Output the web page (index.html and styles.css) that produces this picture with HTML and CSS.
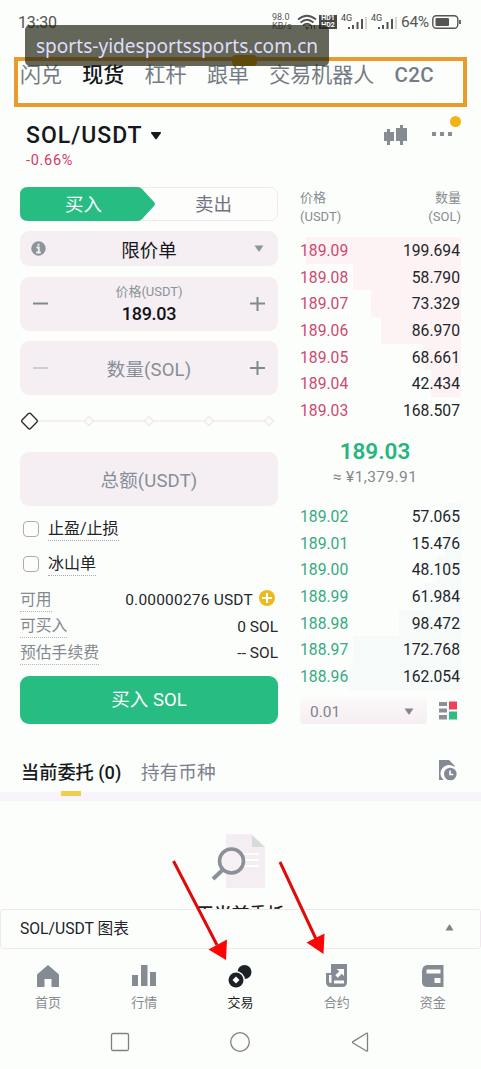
FILE: index.html
```html
<!DOCTYPE html>
<html lang="zh-CN">
<head>
<meta charset="utf-8">
<title>SOL/USDT</title>
<link rel="stylesheet" href="styles.css">
</head>
<body>
<div class="screen">
  <header class="status">
    <span class="clock">13:30</span>
    <span class="speed"><span>98.0</span><span>KB/s</span></span>
    <svg class="wifi" width="20" height="17" viewBox="0 0 20 17" fill="none" stroke="#555" stroke-width="1.7"><path d="M1 5.500Q10-2 19 5.500M3.500 8.500Q10 3 16.500 8.500M6 11.500Q10 8 14 11.500"/><path d="M8 13.300h4l-2 2.400z" fill="#555" stroke="none"/><path d="M14.500 11v4M17.500 11v4" stroke-width="1"/></svg>
    <span class="hd"><span>HD1</span><span>HD2</span></span>
    <svg class="signal" width="27" height="17" viewBox="0 0 27 17"><text x="0" y="7" class="gen">4G</text><path d="M7 13h2v2H7zM11 11h2v4h-2zM15.500 8h2v7h-2zM20 5h2v10h-2z" fill="#555"/><path d="M24 3h2v12h-2z" fill="#d4d4d4"/></svg>
    <svg class="signal" width="27" height="17" viewBox="0 0 27 17"><text x="0" y="7" class="gen">4G</text><path d="M7 13h2v2H7zM11 11h2v4h-2zM15.500 8h2v7h-2zM20 5h2v10h-2z" fill="#555"/><path d="M24 3h2v12h-2z" fill="#d4d4d4"/></svg>
    <span class="percent">64%</span>
    <svg class="battery" width="30" height="14" viewBox="0 0 30 14"><rect x=".8" y=".8" width="25" height="12.400" rx="3.500" fill="none" stroke="#555" stroke-width="1.400"/><rect x="3.500" y="3" width="13.500" height="8" rx="1" fill="#555"/><path d="M28 5v4" stroke="#555" stroke-width="1.800"/></svg>
  </header>
  <nav class="tabs">
    <span>闪兑</span><span class="on">现货</span><span>杠杆</span><span>跟单</span><span>交易机器人</span><span class="c2c">C2C</span>
    <i class="tabs-badge"></i>
  </nav>
  <section class="pair">
    <div class="pair-main">
      <div class="pair-name"><span>SOL/USDT</span><svg width="12" height="9" viewBox="0 0 12 9"><path d="M1.500 1h9q1 .3.300 1.300L6.700 8q-.7.700-1.400 0L1.200 2.300Q.5 1.300 1.500 1z" fill="#15181d"/></svg></div>
      <div class="change">-0.66%</div>
    </div>
    <svg class="candles" width="24" height="22" viewBox="0 0 24 22" fill="#858c93"><path d="M0 7h3V4h3v3h4v9H6v4H3v-4H0zM12 3h4V0h3v3h4v13h-4v4h-3v-4h-4z"/></svg>
    <div class="more"><i></i><i></i><i></i><b></b></div>
  </section>
  <main class="trade">
    <section class="form">
      <div class="side">
        <svg width="258" height="34" viewBox="0 0 258 34"><rect x=".5" y=".5" width="257" height="33" rx="7" fill="#fdfdfc" stroke="#f2e8ee"/><path d="M8 0H117q4 0 6 3l11 12q2 2 0 4L123 31q-2 3-6 3H8q-8 0-8-8V8q0-8 8-8z" fill="#27bc81"/></svg>
        <span class="buy">买入</span><span class="sell">卖出</span>
      </div>
      <div class="box type">
        <svg width="15" height="15" viewBox="0 0 15 15"><circle cx="7.500" cy="7.500" r="7.200" fill="#8d949b"/><path d="M7.500 2.800v2M5.500 6.500h2.300v5M5.200 11.500h4.600" stroke="#f5eef2" stroke-width="1.800" fill="none"/></svg>
        <span>限价单</span>
        <svg width="10" height="7" viewBox="0 0 10 7"><path d="M.5.500h9L5.700 6Q5 7 4.300 6z" fill="#8d949b"/></svg>
      </div>
      <div class="box stepper price">
        <svg width="15" height="15" viewBox="0 0 15 15"><path d="M0 6.500h15" stroke="#808991" stroke-width="2"/></svg>
        <div class="field"><span class="label">价格(USDT)</span><strong>189.03</strong></div>
        <svg width="15" height="15" viewBox="0 0 15 15"><path d="M0 6.500h15M7.500 0v14" stroke="#808991" stroke-width="2"/></svg>
      </div>
      <div class="box stepper amount">
        <svg width="15" height="15" viewBox="0 0 15 15"><path d="M0 7h15" stroke="#cdced2" stroke-width="2"/></svg>
        <span class="placeholder">数量(SOL)</span>
        <svg width="15" height="15" viewBox="0 0 15 15"><path d="M0 7h15M7.500 0v14" stroke="#808991" stroke-width="2"/></svg>
      </div>
      <svg class="slider" width="258" height="20" viewBox="0 0 258 20"><path d="M18 10h231" stroke="#f5e9ee" stroke-width="1.500"/><g fill="#fcfefb" stroke="#f2e8ec" stroke-width="1.300"><path d="M69 5.500l4.500 4.500-4.500 4.500-4.500-4.500zM129 5.500l4.500 4.500-4.500 4.500-4.500-4.500zM189 5.500l4.500 4.500-4.500 4.500-4.500-4.500zM249 5.500l4.500 4.500-4.500 4.500-4.500-4.500z"/></g><rect x="3.500" y="4" width="12" height="12" rx="1.500" transform="rotate(45 9.500 10)" fill="#fdfffc" stroke="#24272b" stroke-width="1.300"/></svg>
      <div class="box total"><span class="placeholder">总额(USDT)</span></div>
      <div class="check"><i></i><span>止盈/止损</span></div>
      <div class="check"><i></i><span>冰山单</span></div>
      <div class="info first"><span class="key">可用</span><span class="val avail">0.00000276 USDT</span><svg width="16" height="16" viewBox="0 0 16 16"><circle cx="8" cy="8" r="8" fill="#ecba1d"/><path d="M8 3v10M3 8h10" stroke="#fff" stroke-width="2"/></svg></div>
      <div class="info"><span class="key">可买入</span><span class="val">0 SOL</span></div>
      <div class="info"><span class="key">预估手续费</span><span class="val">-- SOL</span></div>
      <div class="submit">买入 SOL</div>
    </section>
    <section class="book">
      <div class="book-head"><span>价格<br>(USDT)</span><span class="r">数量<br>(SOL)</span></div>
      <div class="rows asks">
        <div><i style="width:155px"></i><span>189.09</span><b>199.694</b></div>
        <div><i style="width:108px"></i><span>189.08</span><b>58.790</b></div>
        <div><i style="width:90px"></i><span>189.07</span><b>73.329</b></div>
        <div><i style="width:80px"></i><span>189.06</span><b>86.970</b></div>
        <div><i style="width:38px"></i><span>189.05</span><b>68.661</b></div>
        <div><i style="width:30px"></i><span>189.04</span><b>42.434</b></div>
        <div><i style="width:0px"></i><span>189.03</span><b>168.507</b></div>
      </div>
      <div class="last"><strong>189.03</strong><span>≈ ¥1,379.91</span></div>
      <div class="rows bids">
        <div><i style="width:12px"></i><span>189.02</span><b>57.065</b></div>
        <div><i style="width:16px"></i><span>189.01</span><b>15.476</b></div>
        <div><i style="width:24px"></i><span>189.00</span><b>48.105</b></div>
        <div><i style="width:36px"></i><span>188.99</span><b>61.984</b></div>
        <div><i style="width:62px"></i><span>188.98</span><b>98.472</b></div>
        <div><i style="width:108px"></i><span>188.97</span><b>172.768</b></div>
        <div><i style="width:112px"></i><span>188.96</span><b>162.054</b></div>
      </div>
      <div class="book-foot">
        <div class="tick"><span>0.01</span><svg width="10" height="7" viewBox="0 0 10 7"><path d="M.5.500h9L5.700 6Q5 7 4.300 6z" fill="#83888d"/></svg></div>
        <svg width="19" height="19" viewBox="0 0 19 19"><path d="M0 1h8v4H0zM0 7.500h8v4H0zM0 14h8v4.500H0z" fill="#8b9096"/><path d="M10 .5h8v8h-8z" fill="#ee4059"/><path d="M10 10.500h8v8h-8z" fill="#2abd84"/></svg>
      </div>
    </section>
  </main>
  <nav class="orders">
    <span class="on">当前委托 (0)</span><span>持有币种</span>
    <svg width="19" height="21" viewBox="0 0 19 21"><path d="M1 0h10l5.500 5.500V7A8.500 8.500 0 0 0 5.500 20H1z" fill="#848a94"/><circle cx="12.300" cy="14" r="6.300" fill="#848a94"/><path d="M12 10.500v4h3.300" stroke="#fff" stroke-width="1.600" fill="none"/></svg>
  </nav>
  <section class="empty">
    <svg width="56" height="56" viewBox="0 0 56 56"><path d="M15 0h26v13h13v41H15z" fill="#f4edf1"/><path d="M41 1l13 12H41z" fill="#d4dcdb"/><path d="M31 20h17M32 26h16M30 32h18" stroke="#fbfffc" stroke-width="2"/><circle cx="20.500" cy="27" r="12" fill="#f5f1f4" stroke="#8b9198" stroke-width="3.600"/><path d="M11.500 36L2 45" stroke="#8b9198" stroke-width="4"/></svg>
    <span>无当前委托</span>
  </section>
  <section class="chart"><span>SOL/USDT 图表</span><svg width="9" height="7" viewBox="0 0 9 7"><path d="M.5 6.500h8L5 .8q-.5-.6-1 0z" fill="#7d8288"/></svg></section>
  <nav class="bottom">
    <div><svg width="24" height="24" viewBox="0 0 24 24"><path d="M12 0l11 9.500V22h-7.500v-8h-7v8H1V9.500z" fill="#848b94"/></svg><span>首页</span></div>
    <div><svg width="26" height="24" viewBox="0 0 26 24"><path d="M1 10h6v11H1zM10 0h6.500v21H10zM19 7h6v14h-6z" fill="#848b94"/></svg><span>行情</span></div>
    <div class="on"><svg width="24" height="24" viewBox="0 0 24 24"><circle cx="16.500" cy="7" r="7" fill="#1d2228"/><circle cx="8" cy="15" r="9" fill="#fcfefb"/><circle cx="8" cy="15" r="7.500" fill="#1d2228"/><path d="M8 11.500l3.500 3.500L8 18.500 4.500 15z" fill="#fcfefb"/></svg><span>交易</span></div>
    <div><svg width="24" height="24" viewBox="0 0 24 24"><path d="M1 8h5V-1h16v18q0 5-5 5H6q-5 0-5-5z" fill="#848b94"/><path d="M4 10h2.500v8H5.500Q4 18 4 16zM9 15.500h10v3H9zM11.500 4H19v7l-2.200-2.200-4 4-2.500-2.500 4-4z" fill="#fcfefb"/></svg><span>合约</span></div>
    <div><svg width="24" height="24" viewBox="0 0 24 24"><path d="M6.500 0h16v22h-16Q1 22 1 17V6q.5-6 5.500-6z" fill="#848b94"/><path d="M5.500 4.500h14v4h-14zM13.500 13h6v5h-6z" fill="#fcfefb"/></svg><span>资金</span></div>
  </nav>
  <footer class="system">
    <svg width="20" height="20" viewBox="0 0 20 20"><rect x="1.500" y="1.500" width="17" height="17" rx="1.500"/></svg>
    <svg width="22" height="22" viewBox="0 0 22 22"><circle cx="11" cy="11" r="9.300"/></svg>
    <svg width="20" height="22" viewBox="0 0 20 22"><path d="M16.500 2.300q1-.6 1 .6v16.500q0 1.200-1 .6L3 12q-1-.7 0-1.400z"/></svg>
  </footer>
  <div class="banner">sports-yidesportssports.com.cn</div>
  <svg class="arrows" width="481" height="1069" viewBox="0 0 481 1069"><path d="M173.500 861L217 945M280 862l36 77" stroke="#e00a0a" stroke-width="3"/><path d="M226 960l-17.500-10.500L227 939.500zM323.500 954L306.500 942.500 324.500 933.500z" fill="#fb0505"/></svg>
</div>
</body>
</html>
```
FILE: styles.css
```css
* { box-sizing: border-box; }
body { margin: 0; background: #fcfefb; font-family: Roboto, "Noto Sans CJK SC", sans-serif; color: #202328; }
svg { display: block; flex: none; overflow: visible; }
i { font-style: normal; }
.screen { position: relative; width: 481px; height: 1069px; overflow: hidden; }

.status { display: flex; align-items: center; height: 44px; padding-left: 18px; color: #555; }
.clock { font-size: 16px; width: 254px; letter-spacing: -.2px; }
.speed { display: flex; flex-direction: column; width: 25px; font-size: 9px; line-height: 9px; }
.wifi { margin-right: 2px; }
.hd { display: flex; flex-direction: column; width: 18px; height: 14px; background: #484848; color: #fff; font: bold 7px/7px Roboto, sans-serif; text-align: center; margin-right: 4px; }
.signal { margin-right: 3px; }
.gen { font-size: 9px; fill: #444; }
.percent { width: 31px; font-size: 15.500px; letter-spacing: -.3px; }

.tabs { position: relative; display: flex; width: 453px; height: 50px; margin: 13px 0 0 14px; padding-left: 2px; border: 4px solid #e79c2b; font-size: 21px; line-height: 29px; color: #747b85; }
.tabs span { margin-right: 20.300px; flex: none; }
.tabs .on { color: #14171b; font-weight: 500; }
.tabs .c2c { font-weight: 500; font-size: 20.500px; letter-spacing: .4px; margin: 0; }
.tabs-badge { position: absolute; left: 214px; top: -6px; width: 25px; height: 11px; border-radius: 4px; background: #eca600; }

.pair { display: flex; height: 80px; padding: 14px 0 0 26px; }
.pair-main { width: 358px; }
.pair-name { display: flex; align-items: center; height: 28px; gap: 8px; font-size: 23px; font-weight: 500; color: #15181d; letter-spacing: 1px; }
.pair-name span { width: 116px; white-space: nowrap; }
.change { font-size: 14.500px; line-height: 22px; margin-top: 1px; color: #cf3c65; letter-spacing: .7px; }
.candles { margin-top: 4px; }
.more { position: relative; display: flex; gap: 4px; width: 31px; margin: 11px 0 0 24px; }
.more i { width: 4px; height: 4px; background: #858c93; }
.more b { position: absolute; left: 18px; top: -16px; width: 11px; height: 11px; border-radius: 50%; background: #f0b414; }

.trade { display: flex; gap: 22px; height: 537px; padding-left: 20px; }
.form { width: 258px; }
.side { position: relative; height: 34px; }
.side span { position: absolute; top: 5px; font-size: 18.500px; line-height: 27px; }
.buy { left: 45px; color: #fff; }
.sell { left: 175px; color: #6f7580; }
.box { display: flex; align-items: center; justify-content: space-between; background: #f5eef2; border-radius: 9px; }
.type { height: 35px; margin-top: 10px; padding: 0 14px 0 11px; font-size: 18.500px; color: #15181c; }
.type span { position: relative; left: -1px; }
.stepper { height: 54px; margin-top: 11px; padding: 0 13px 0 13px; }
.amount { margin-top: 10px; }
.field { display: flex; flex-direction: column; align-items: center; }
.label { font-size: 13px; line-height: 19px; color: #8b9299; }
.field strong { font-size: 18px; line-height: 25px; font-weight: 500; color: #101317; letter-spacing: -.3px; }
.placeholder { font-size: 18.500px; letter-spacing: .15px; color: #878e96; }
.slider { margin-top: 16px; }
.total { height: 54px; margin-top: 21px; justify-content: center; }
.check { display: flex; height: 35px; align-items: center; padding-left: 3px; }
.total + .check { margin-top: 5px; }
.check i { width: 16px; height: 16px; border: 1.500px solid #aaaeb2; border-radius: 4px; margin-right: 9px; }
.check span { font-size: 16px; line-height: 23px; border-bottom: 1px dotted #a9a9af; }
.info { display: flex; align-items: center; height: 26.500px; font-size: 15.500px; }
.info.first { margin-top: 6px; }
.key { color: #838991; border-bottom: 1px dotted #b6b6bb; line-height: 22px; margin-right: auto; font-size: 15.800px; }
.val { color: #25282c; }
.avail { margin-right: 6px; letter-spacing: .2px; }
.info svg { margin: -5px 3px 0 0; }
.submit { height: 48px; margin-top: 9px; border-radius: 9px; background: #27bc82; color: #fff; font-size: 18.500px; line-height: 49px; text-align: center; }

.book { width: 161px; }
.book-head { display: flex; justify-content: space-between; height: 50px; padding-top: 2px; font-size: 13px; line-height: 18.500px; color: #878c92; }
.r { text-align: right; }
.rows { height: 187px; }
.rows div { position: relative; display: flex; justify-content: space-between; height: 26.700px; line-height: 27px; font-size: 15.700px; padding-right: 1px; }
.rows i { position: absolute; right: 0; top: 0; height: 100%; }
.rows span, .rows b { position: relative; font-weight: 400; }
.rows b { color: #23262a; }
.asks span { color: #cc4a70; }
.bids span { color: #37a983; }
.asks i { background: #fdf2f4; }
.bids i { background: #f6fbf9; }
.last { display: flex; flex-direction: column; align-items: center; height: 79px; padding-right: 11px; padding-top: 12px; }
.last strong { font-size: 22.500px; line-height: 31px; font-weight: 600; color: #27b57e; }
.last span { font-size: 15.500px; line-height: 21px; letter-spacing: .4px; color: #85898d; }
.book-foot { display: flex; align-items: center; height: 27px; margin-top: 7px; gap: 12px; }
.tick { display: flex; justify-content: space-between; align-items: center; width: 127px; height: 27px; padding: 2px 13px 0 10px; border-radius: 4px; background: linear-gradient(#fcf9fa, #f5eef2); color: #7f8388; font-size: 15.500px; }

.orders { display: flex; align-items: center; height: 77px; padding: 25px 24px 0 21px; border-bottom: 9px solid #f9f4fb; font-size: 18.700px; color: #7d838d; position: relative; }
.orders .on { color: #17191c; width: 120px; white-space: nowrap; font-weight: 500; font-size: 18.200px; }
.orders .on::after { content: ""; position: absolute; left: 61px; bottom: -4px; width: 20px; height: 5px; background: #f1ce4c; }
.orders svg { margin-left: auto; }
.empty { display: flex; flex-direction: column; align-items: center; height: 107.500px; padding-top: 33px; overflow: hidden; }
.empty svg { margin-left: -3px; }
.empty span { margin-top: 12px; font-size: 17.700px; line-height: 26px; color: #222; font-weight: 500; }
.chart { display: flex; align-items: center; justify-content: space-between; height: 40px; padding: 0 26px 2px 19px; border: 1px solid #f3e7ed; border-radius: 3px; background: #fcfefb; font-size: 15.700px; position: relative; }
.bottom { display: flex; height: 70px; padding-top: 16px; }
.bottom div { display: flex; flex-direction: column; align-items: center; width: 96.200px; color: #858b93; font-size: 13px; line-height: 26px; }
.bottom .on { color: #17191c; }
.bottom span { margin-top: 1px; }
.system { display: flex; align-items: center; justify-content: space-between; width: 260px; height: 47px; margin-left: 110px; }
.system svg { fill: none; stroke: #808083; stroke-width: 1.300; }
.banner { position: absolute; left: 25px; top: 25px; width: 304px; height: 41px; border-radius: 5px; background: rgba(32, 34, 18, .69); color: #dedefa; font: 19.100px/43px "Noto Sans", sans-serif; text-align: center; white-space: nowrap; }
.arrows { position: absolute; left: 0; top: 0; }
```
